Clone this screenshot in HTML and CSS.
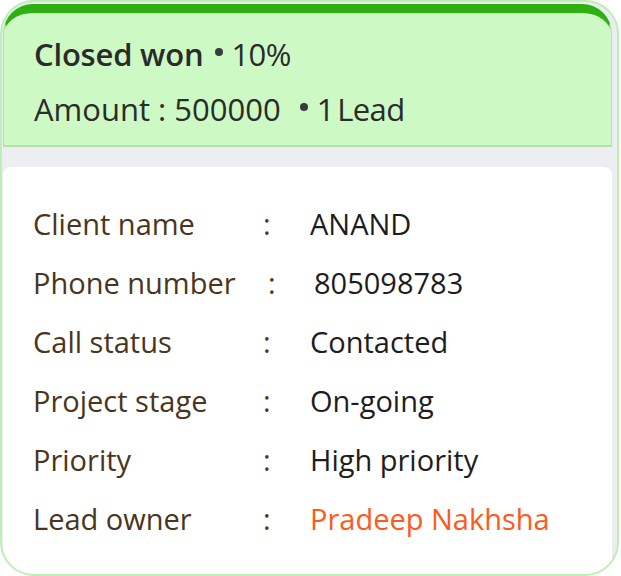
FILE: index.html
```html
<!DOCTYPE html>
<html lang="en">
<head>
<meta charset="utf-8">
<title>Lead card</title>
<link rel="stylesheet" href="styles.css">
</head>
<body>
<div class="card">
  <div class="header">
    <div class="line"><span class="stage">Closed won</span><span class="dot dot--first"></span><span class="tight">10%</span></div>
    <div class="line">Amount : 500000<span class="dot dot--second"></span><span class="tight">1 Lead</span></div>
  </div>
  <div class="gap"></div>
  <div class="body">
    <div class="row"><span class="label">Client name</span><span class="colon">:</span><span class="value">ANAND</span></div>
    <div class="row row--shift"><span class="label">Phone number</span><span class="colon">:</span><span class="value">805098783</span></div>
    <div class="row"><span class="label">Call status</span><span class="colon">:</span><span class="value">Contacted</span></div>
    <div class="row"><span class="label">Project stage</span><span class="colon">:</span><span class="value">On-going</span></div>
    <div class="row"><span class="label">Priority</span><span class="colon">:</span><span class="value">High priority</span></div>
    <div class="row"><span class="label">Lead owner</span><span class="colon">:</span><span class="value value--owner">Pradeep Nakhsha</span></div>
  </div>
</div>
</body>
</html>
```
FILE: styles.css
```css
html, body {
  margin: 0;
  padding: 0;
  background: #ffffff;
}
body {
  font-family: "Open Sans", "Noto Sans", sans-serif;
}
.card {
  box-sizing: border-box;
  width: 619px;
  height: 576px;
  border: 2px solid #bdeeb5;
  border-radius: 34px;
  background: #eceef2;
  padding: 2px 5px 0 1px;
  overflow: hidden;
  display: flex;
  flex-direction: column;
}
.header {
  background: #cdf9c5;
  border-top: 9px solid #2db010;
  border-left: 1px solid #b3e3a9;
  border-right: 1px solid #b3e3a9;
  border-bottom: 2px solid #b3e3a9;
  border-radius: 30px 30px 0 0;
  padding: 14px 0 8px 30px;
  color: #2b2b2b;
}
.line {
  font-size: 31px;
  line-height: 55px;
  display: flex;
  align-items: baseline;
}
.stage {
  font-weight: 600;
  letter-spacing: -0.2px;
}
.tight {
  letter-spacing: -0.6px;
  word-spacing: -4px;
}
.dot {
  width: 8px;
  height: 8px;
  border-radius: 50%;
  background: #3b3b3b;
  align-self: center;
  transform: translateY(-3px);
}
.dot--first {
  margin: 0 8px 0 12px;
}
.dot--second {
  margin: 0 9px 0 19px;
}
.gap {
  height: 20px;
  flex: none;
}
.body {
  flex: 1;
  background: #ffffff;
  border-radius: 8px 8px 0 0;
  padding: 27px 0 0 30px;
}
.row {
  display: grid;
  grid-template-columns: 230px 47px auto;
  font-size: 29px;
  line-height: 59px;
}
.row--shift {
  grid-template-columns: 235px 46px auto;
}
.label {
  color: #4a3521;
}
.colon {
  color: #4a3521;
}
.value {
  color: #1d1d1d;
}
.value--owner {
  color: #ff5a1a;
}
```
